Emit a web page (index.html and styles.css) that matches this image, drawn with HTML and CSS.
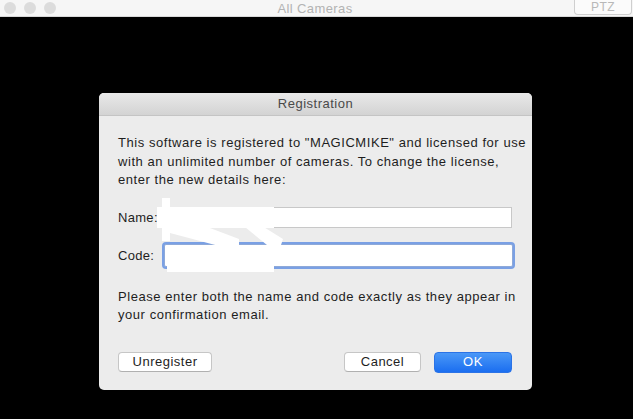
FILE: index.html
```html
<!DOCTYPE html>
<html>
<head>
<meta charset="utf-8">
<link rel="stylesheet" href="styles.css">
</head>
<body>
<div class="window">
  <div class="titlebar">
    <div class="lights">
      <span class="light"></span><span class="light"></span><span class="light"></span>
    </div>
    <div class="wtitle">All Cameras</div>
    <div class="ptz">PTZ</div>
  </div>
  <div class="stage">
    <div class="dialog">
      <div class="dtitle">Registration</div>
      <div class="dbody">
        <p class="msg">This software is registered to "MAGICMIKE" and licensed for use with an unlimited number of cameras. To change the license, enter the new details here:</p>
        <div class="fields">
          <div class="row"><span class="lbl">Name:</span><span class="field"></span></div>
          <div class="row"><span class="lbl">Code:</span><span class="field focus"></span></div>
          <svg class="scribble" width="140" height="80" viewBox="0 0 140 80">
            <rect x="0" y="12" width="117" height="21" fill="#fff"/>
            <rect x="5" y="3" width="8" height="43" fill="#fff"/>
            <polygon points="13,30 45,30 82,44 80,51 62,51 13,38" fill="#fff"/>
            <polygon points="72,19 86,19 126,44 124,50 110,50" fill="#fff"/>
            <rect x="10" y="69" width="107" height="8" fill="#fff"/>
            <rect x="58" y="44" width="24" height="7" fill="#fff"/>
          </svg>
        </div>
        <p class="msg hint">Please enter both the name and code exactly as they appear in your confirmation email.</p>
        <div class="buttons">
          <button class="btn">Unregister</button>
          <div class="spacer"></div>
          <button class="btn cancel">Cancel</button>
          <button class="btn ok">OK</button>
        </div>
      </div>
    </div>
  </div>
</div>
</body>
</html>
```
FILE: styles.css
```css
html, body {
  margin: 0;
  padding: 0;
  background: #000;
  width: 633px;
  height: 419px;
  overflow: hidden;
  font-family: "Liberation Sans", Arial, sans-serif;
}
.window {
  display: flex;
  flex-direction: column;
  height: 419px;
}
.titlebar {
  height: 16px;
  background: #f6f6f6;
  border-bottom: 1px solid #d8d8d8;
  display: flex;
  align-items: center;
}
.lights {
  display: flex;
  gap: 8px;
  padding-left: 4px;
  align-items: center;
}
.light {
  width: 12px;
  height: 12px;
  border-radius: 50%;
  background: #dcdcdc;
}
.wtitle {
  flex: 1;
  text-align: center;
  color: #b3b3b3;
  font-size: 13px;
  letter-spacing: 0.4px;
}
.ptz {
  width: 56px;
  height: 14px;
  align-self: flex-start;
  border: 1px solid #cfcfcf;
  border-top: 0;
  border-radius: 0 0 4px 4px;
  background: #fbfbfb;
  color: #b8b8b8;
  font-size: 12px;
  letter-spacing: 0.4px;
  text-align: center;
  line-height: 15px;
  margin-right: 1px;
}
.stage {
  flex: 1;
  padding: 76px 0 0 99px;
}
.dialog {
  width: 433px;
  height: 297px;
  background: #ececec;
  border-radius: 5px;
  overflow: hidden;
  display: flex;
  flex-direction: column;
}
.dtitle {
  height: 22px;
  line-height: 22px;
  background: linear-gradient(#e9e9e9, #d3d3d3);
  border-bottom: 1px solid #c4c4c4;
  text-align: center;
  font-size: 13px;
  letter-spacing: 0.5px;
  color: #4a4a4a;
}
.dbody {
  padding: 18px 0 0 19px;
  display: flex;
  flex-direction: column;
}
.msg {
  margin: 0;
  width: 412px;
  font-size: 13px;
  letter-spacing: 0.55px;
  line-height: 18.5px;
  color: #1e1e1e;
}
.fields {
  position: relative;
  margin-top: 17px;
  display: flex;
  flex-direction: column;
  gap: 17px;
}
.row {
  display: flex;
  align-items: center;
  height: 21px;
}
.lbl {
  width: 45px;
  font-size: 13px;
  letter-spacing: 0.3px;
  color: #1e1e1e;
}
.field {
  width: 347px;
  height: 19px;
  background: #fff;
  border: 1px solid #c8c8c8;
}
.field.focus {
  height: 21px;
  border: 1px solid #8ea9d8;
  box-shadow: 0 0 0 2px #7aa0e4;
  border-radius: 2px;
  margin-left: 1px;
}
.scribble {
  position: absolute;
  left: 39px;
  top: -12px;
}
.hint {
  margin-top: 22px;
}
.buttons {
  margin-top: 27px;
  display: flex;
  align-items: center;
  gap: 13px;
  padding-right: 20px;
}
.spacer {
  flex: 1;
}
.btn {
  font-family: "Liberation Sans", Arial, sans-serif;
  font-size: 13px;
  letter-spacing: 0.5px;
  color: #1e1e1e;
  background: #fff;
  border: 1px solid #c6c6c6;
  border-bottom-color: #b0b0b0;
  border-radius: 4px;
  height: 20px;
  width: 94px;
  padding: 0;
  margin: 0;
  line-height: 18px;
}
.cancel {
  width: 77px;
}
.ok {
  width: 78px;
  height: 21px;
  color: #fff;
  border: 1px solid #2b73e6;
  background: linear-gradient(#4a98f7, #1b6ef0);
}
```
